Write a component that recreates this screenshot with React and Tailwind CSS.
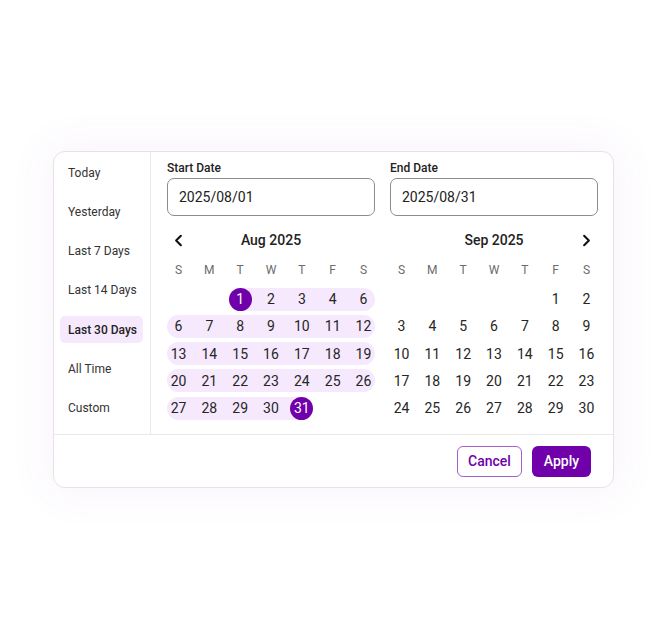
import React from "react";
import { ChevronLeft, ChevronRight } from "lucide-react";

const presets = ["Today", "Yesterday", "Last 7 Days", "Last 14 Days", "Last 30 Days", "All Time", "Custom"];
const weekdays = ["S", "M", "T", "W", "T", "F", "S"];

function Cell({ d, sel }) {
  if (d === null) return <div className="w-[23px] h-[23px] shrink-0" />;
  return (
    <div
      className={
        "w-[23px] h-[23px] shrink-0 flex items-center justify-center rounded-full text-[14px] leading-none " +
        (sel ? "bg-[#7000aa] text-white" : "text-[#262626]")
      }
    >
      {d}
    </div>
  );
}

function Row({ before = [], range = [], after = [], sel = [] }) {
  return (
    <div className="flex gap-[7.83px] h-[23px]">
      {before.map((d, i) => (
        <Cell key={"b" + i} d={d} sel={sel.includes(d)} />
      ))}
      {range.length > 0 && (
        <div className="flex gap-[7.83px] bg-[#f6e9fd] rounded-full">
          {range.map((d, i) => (
            <Cell key={"r" + i} d={d} sel={sel.includes(d)} />
          ))}
        </div>
      )}
      {after.map((d, i) => (
        <Cell key={"a" + i} d={d} sel={sel.includes(d)} />
      ))}
    </div>
  );
}

function Calendar({ title, left, right, rows }) {
  return (
    <div className="flex flex-col">
      <div className="mt-[14px] h-[20px] flex items-center justify-between">
        <div className="w-[23px] flex items-center justify-center">
          {left && <ChevronLeft size={19} strokeWidth={2.6} color="#111" />}
        </div>
        <div className="text-[14px] font-medium text-[#222222] leading-none">{title}</div>
        <div className="w-[23px] flex items-center justify-center">
          {right && <ChevronRight size={19} strokeWidth={2.6} color="#111" />}
        </div>
      </div>
      <div className="mt-[10px] h-[20px] flex gap-[7.83px]">
        {weekdays.map((w, i) => (
          <div key={i} className="w-[23px] shrink-0 flex items-center justify-center text-[12px] text-[#6b6b6b]">
            {w}
          </div>
        ))}
      </div>
      <div className="mt-[7.5px] flex flex-col gap-[4.25px]">
        {rows.map((r, i) => (
          <Row key={i} {...r} />
        ))}
      </div>
    </div>
  );
}

export default function App() {
  const augRows = [
    { before: [null, null], range: [1, 2, 3, 4, 6], sel: [1] },
    { range: [6, 7, 8, 9, 10, 11, 12] },
    { range: [13, 14, 15, 16, 17, 18, 19] },
    { range: [20, 21, 22, 23, 24, 25, 26] },
    { range: [27, 28, 29, 30, 31], after: [null, null], sel: [31] },
  ];
  const sepRows = [
    { before: [null, null, null, null, null, 1, 2] },
    { before: [3, 4, 5, 6, 7, 8, 9] },
    { before: [10, 11, 12, 13, 14, 15, 16] },
    { before: [17, 18, 19, 20, 21, 22, 23] },
    { before: [24, 25, 26, 27, 28, 29, 30] },
  ];
  return (
    <div
      className="w-[665px] h-[640px] bg-white pt-[151px] pl-[53px]"
      style={{ fontFamily: "Roboto, 'Liberation Sans', sans-serif" }}
    >
      <div className="w-[561px] rounded-[12px] border border-[#e6e2e8] bg-white shadow-[0_0_40px_8px_rgba(150,60,200,0.05)] overflow-hidden">
        <div className="flex">
          <div className="w-[97px] border-r border-[#e8e8e8] pt-[7px] pl-[6px] pr-[7px] flex flex-col gap-[12.3px]">
            {presets.map((p) => {
              const active = p === "Last 30 Days";
              return (
                <div
                  key={p}
                  className={
                    "h-[27px] flex items-center pl-[8px] rounded-[5px] text-[12px] whitespace-nowrap " +
                    (active ? "bg-[#f6e9fd] font-medium text-[#222222]" : "text-[#333333]")
                  }
                >
                  {p}
                </div>
              );
            })}
          </div>
          <div className="flex-1 pl-[16px] pr-[15px] pt-[8px] pb-[14.5px] grid grid-cols-2 gap-x-[15px]">
            <div className="flex flex-col">
              <div className="h-[16px] text-[12px] font-medium text-[#222222] leading-[16px]">Start Date</div>
              <div className="mt-[2px] h-[38px] rounded-[7px] border border-[#8c8c8c] flex items-center pl-[11px] text-[14px] text-[#222222]">
                2025/08/01
              </div>
              <Calendar title="Aug 2025" left rows={augRows} />
            </div>
            <div className="flex flex-col">
              <div className="h-[16px] text-[12px] font-medium text-[#222222] leading-[16px]">End Date</div>
              <div className="mt-[2px] h-[38px] rounded-[7px] border border-[#8c8c8c] flex items-center pl-[11px] text-[14px] text-[#222222]">
                2025/08/31
              </div>
              <Calendar title="Sep 2025" right rows={sepRows} />
            </div>
          </div>
        </div>
        <div className="border-t border-[#e8e8e8] h-[53px] flex items-center justify-end gap-[10px] pr-[22px]">
          <button className="w-[65px] h-[31px] rounded-[6px] border border-[#a45fd0] text-[#7000aa] text-[14px] font-medium">
            Cancel
          </button>
          <button className="w-[59px] h-[31px] rounded-[6px] bg-[#7000aa] text-white text-[14px] font-medium">
            Apply
          </button>
        </div>
      </div>
    </div>
  );
}
